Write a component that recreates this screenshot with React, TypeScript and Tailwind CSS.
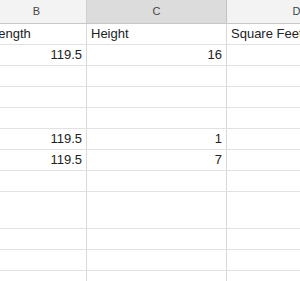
import React from 'react';

type Row = { h: string; b?: string; c?: string; d?: string; bText?: boolean; cText?: boolean };

const rows: Row[] = [
  { h: 'h-[21px]', b: 'Length', c: 'Height', d: 'Square Feet', bText: true, cText: true },
  { h: 'h-[21px]', b: '119.5', c: '16' },
  { h: 'h-[21px]' },
  { h: 'h-[21px]' },
  { h: 'h-[21px]' },
  { h: 'h-[21px]', b: '119.5', c: '1' },
  { h: 'h-[21px]', b: '119.5', c: '7' },
  { h: 'h-[21px]' },
  { h: 'h-[37px]' },
  { h: 'h-[21px]' },
  { h: 'h-[21px]' },
  { h: 'h-[21px]' },
];

export default function App() {
  return (
    <div className="w-[300px] h-[281px] overflow-hidden bg-white font-['Liberation_Sans',Arial,sans-serif] text-[13px] text-[#222]">
      <div className="-ml-[13px] w-[420px]">
        {/* column headers */}
        <div className="grid grid-cols-[100px_140px_140px] h-[24px] border-b border-[#c7c7c7] text-[11px] text-[#444]">
          <div className="flex items-center justify-center bg-[#f3f3f3] border-r border-[#d0d0d0]">B</div>
          <div className="flex items-center justify-center bg-[#dcdcdc] border-r border-[#c4c4c4]">C</div>
          <div className="flex items-center justify-center bg-[#f3f3f3] border-r border-[#d0d0d0]">D</div>
        </div>
        {rows.map((r, i) => (
          <div key={i} className={`grid grid-cols-[100px_140px_140px] ${r.h} border-b border-[#e2e2e2]`}>
            <div className={`flex items-center px-[4px] border-r border-[#d9d9d9] ${r.bText ? 'justify-start' : 'justify-end'}`}>{r.b}</div>
            <div className={`flex items-center px-[4px] border-r border-[#d9d9d9] ${r.cText ? 'justify-start' : 'justify-end'}`}>{r.c}</div>
            <div className="flex items-center px-[4px] border-r border-[#d9d9d9]">{r.d}</div>
          </div>
        ))}
      </div>
    </div>
  );
}
